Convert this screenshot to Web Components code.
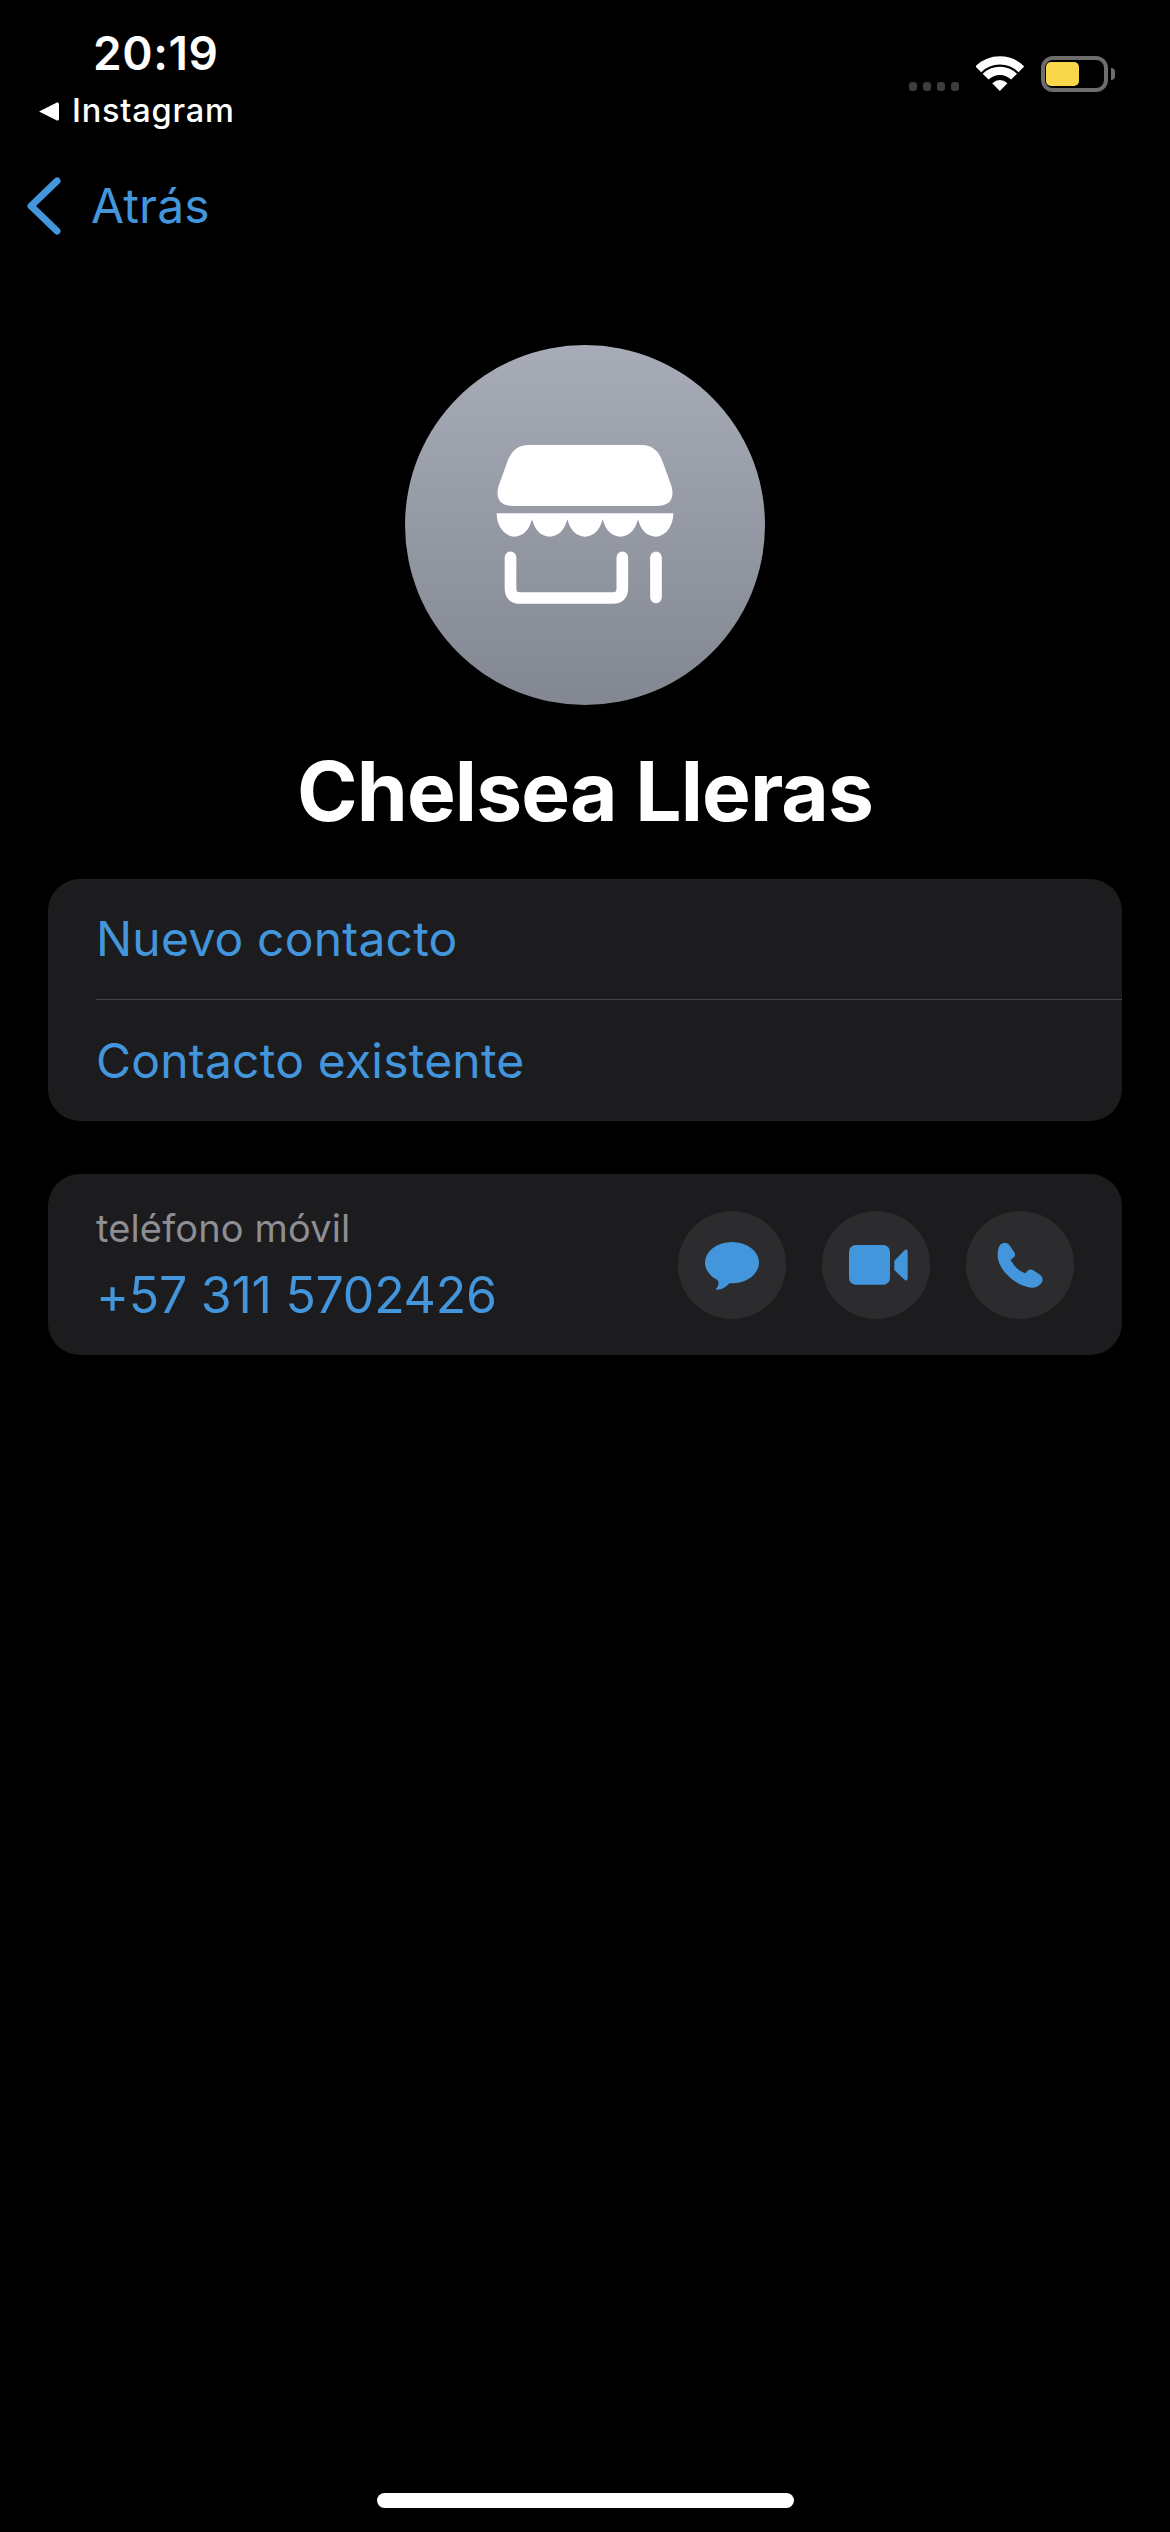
<!DOCTYPE html>
<html lang="es"><head><meta charset="utf-8"><title>Contacto</title>
<style>
html,body{margin:0;background:#000}
body{width:1170px;height:2532px;overflow:hidden;font-family:Inter,"Liberation Sans",sans-serif;color:#fff}
contact-app{display:block;height:2532px}
</style></head><body>
<contact-app>
  <status-bar></status-bar>
  <nav-back>Atrás</nav-back>
  <contact-header name="Chelsea Lleras"></contact-header>
  <action-card>
    <action-row>Nuevo contacto</action-row>
    <action-row divided>Contacto existente</action-row>
  </action-card>
  <phone-card label="teléfono móvil" number="+57 311 5702426"></phone-card>
  <home-bar></home-bar>
</contact-app>
<script>
const def=(name,html)=>{customElements.define(name,class extends HTMLElement{
  constructor(){super();const r=this.attachShadow({mode:'open'});
    r.innerHTML=typeof html==='function'?html(this):html;}
});};
const BLUE='#4396DC';
def('status-bar',`<style>
:host{display:flex;justify-content:space-between;height:170px;box-sizing:border-box;padding:25px 0 0 0}
.left{width:310px;display:flex;flex-direction:column;align-items:flex-start}
.time{font:600 46px/56px Inter,sans-serif;margin-left:93px;letter-spacing:.6px}
.app{display:flex;align-items:center;margin:10px 0 0 38px;height:40px}
.app svg{width:21px;height:21px;margin-right:13px;display:block}
.app span{font:500 32.5px/40px Inter,sans-serif;letter-spacing:.8px}
.right{display:flex;align-items:flex-start;padding:31px 55px 0 0}
.dots{display:flex;gap:5.5px;margin:26px 17px 0 0}
.dots i{width:8.5px;height:8.5px;border-radius:3px;background:#3c3c3c}
.wifi{width:48px;height:35px;margin-right:17px;display:block}
.bat{box-sizing:border-box;width:67px;height:36px;border:4px solid #6d6d6d;border-radius:12px;padding:2px 1px}
.bat i{display:block;width:33px;height:24px;background:#F8D74B;border-radius:5px}
.nub{width:4px;height:12px;margin:12px 0 0 3px;background:#6d6d6d;border-radius:0 6px 6px 0}
</style>
<div class="left"><div class="time">20:19</div>
<div class="app"><svg viewBox="0 0 20 20"><path d="M1 10 L18 1.5 Q20 .8 20 3 V17 Q20 19.2 18 18.5Z" fill="#fff"/></svg><span>Instagram</span></div></div>
<div class="right"><div class="dots"><i></i><i></i><i></i><i></i></div>
<svg class="wifi" viewBox="315 78 145 105"><path d="M322 118 A92 92 0 0 1 452 118 M344 140 A61 61 0 0 1 430 140" fill="none" stroke="#fff" stroke-width="25"/><path d="M387 183 L364 160 Q387 140 410 160Z" fill="#fff"/></svg>
<div class="bat"><i></i></div><div class="nub"></div></div>`);
def('nav-back',`<style>
:host{display:flex;align-items:center;height:72px;padding-left:27px;margin-bottom:103px;color:${BLUE}}
svg{width:36px;height:60px;display:block;margin-right:28px}
span{font:400 48px/72px Inter,sans-serif;letter-spacing:.1px}
</style><svg viewBox="0 0 36 60"><path d="M30 5 L4 30 L30 55" fill="none" stroke="${BLUE}" stroke-width="7" stroke-linecap="round" stroke-linejoin="round"/></svg><span><slot></slot></span>`);
def('contact-header',h=>`<style>
:host{display:flex;flex-direction:column;align-items:center}
.av{width:360px;height:360px;border-radius:50%;background:linear-gradient(#A8ACB8,#838791);display:block}
h1{margin:39px 0 0;font:700 82px/96px Inter,sans-serif;letter-spacing:-.9px;color:#fff}
</style>
<svg class="av" viewBox="45 45 1080 1080">
<path fill="#fff" d="M415 345H755Q800 345 818 395L845 470Q858 528 800 528H370Q312 528 325 470L352 395Q370 345 415 345Z"/>
<path fill="#fff" d="M320 550H850C850 590 825 620 797 620C772 620 752 600 744 568C736 600 716 620 691 620C666 620 646 600 638 568C630 600 610 620 585 620C560 620 540 600 532 568C524 600 504 620 479 620C454 620 434 600 426 568C418 600 398 620 373 620C345 620 320 590 320 550Z"/>
<path fill="none" stroke="#fff" stroke-width="35" stroke-linecap="round" d="M361.500 682V775Q361.500 804 390 804H668Q697 804 697 775V682M798 682V802"/>
</svg><h1>${h.getAttribute('name')}</h1>`);
def('action-card',`<style>
:host{display:block;margin:39px 48px 0;background:#1C1C1E;border-radius:32px;overflow:hidden}
</style><slot></slot>`);
def('action-row',h=>`<style>
:host{display:block;height:${h.hasAttribute('divided')?122:120}px;box-sizing:border-box;padding-left:48px;color:${BLUE}}
.t{font:400 48px/120px Inter,sans-serif;letter-spacing:.2px;height:100%}
.t.d{border-top:1px solid #434345;box-sizing:border-box;line-height:121px}
</style><div class="t ${h.hasAttribute('divided')?'d':''}"><slot></slot></div>`);
def('phone-card',h=>`<style>
:host{display:flex;align-items:center;justify-content:space-between;margin:53px 48px 0;height:181px;padding:0 48px 0 48px;background:#1C1C1E;border-radius:32px}
.l{font:400 38px/48px Inter,sans-serif;color:#8E8E93;letter-spacing:.15px}
.n{font:400 50px/60px Inter,sans-serif;color:${BLUE};margin-top:13px;letter-spacing:-.25px}
.b{display:flex;gap:36px}
svg{width:108px;height:108px;display:block;border-radius:50%;background:#2C2C2E}
</style><div><div class="l">${h.getAttribute('label')}</div><div class="n">${h.getAttribute('number')}</div></div>
<div class="b">
<svg viewBox="54 63 324 324"><ellipse cx="216" cy="218" rx="81" ry="62" fill="${BLUE}"/><path fill="${BLUE}" d="M172 268C178 280 176 290 168 296C166 300 175 300 182 298C192 295 200 288 208 280Z"/></svg>
<svg viewBox="486 63 324 324"><rect x="567" y="165" width="123" height="119" rx="20" fill="${BLUE}"/><path fill="${BLUE}" d="M703 212L732 182Q743 172 743 188V262Q743 278 732 268L703 240Z"/></svg>
<svg viewBox="918 63 324 324"><path fill="${BLUE}" d="M1022 163Q1037 152 1048 165L1062 185Q1070 197 1058 205L1052 210Q1060 225 1072 236Q1084 246 1096 250L1103 242Q1112 235 1122 242L1142 256Q1152 266 1145 278Q1130 298 1105 292Q1065 282 1037 250Q1010 218 1013 190Q1014 172 1022 163Z"/></svg>
</div>`);
def('home-bar',`<style>
:host{display:flex;justify-content:center;margin-top:1138px}
i{width:417px;height:15px;border-radius:7.500px;background:#fff;display:block}
</style><i></i>`);
</script>
</body></html>
